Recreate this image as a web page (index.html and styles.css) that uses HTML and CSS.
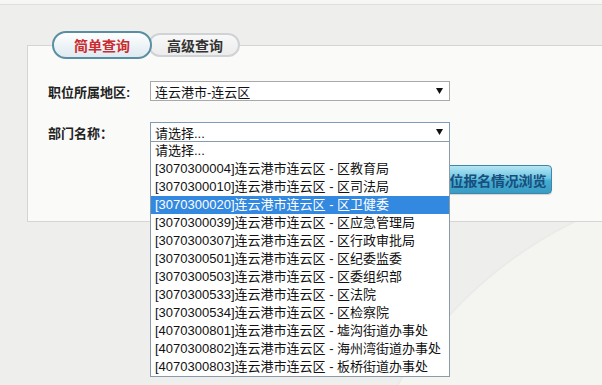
FILE: index.html
```html
<!DOCTYPE html>
<html lang="zh-CN">
<head>
<meta charset="utf-8">
<title>职位查询</title>
<link rel="stylesheet" href="styles.css">
</head>
<body>
<div class="topline"></div>
<div class="panel">
  <div class="tabs">
    <div class="tab tab-active">简单查询</div>
    <div class="tab tab-idle">高级查询</div>
  </div>
  <div class="row row-first">
    <div class="label">职位所属地区:</div>
    <div class="select">
      <span class="select-text">连云港市-连云区</span>
      <svg class="arrow" width="7" height="6" viewBox="0 0 7 6"><path d="M0 0H7L3.5 6Z" fill="#111"/></svg>
    </div>
  </div>
  <div class="row row-second">
    <div class="label">部门名称：</div>
    <div class="select select-focus">
      <span class="select-text">请选择...</span>
      <svg class="arrow" width="7" height="6" viewBox="0 0 7 6"><path d="M0 0H7L3.5 6Z" fill="#111"/></svg>
    </div>
  </div>
  <div class="button-row">
    <div class="btn">职位报名情况浏览</div>
  </div>
  <ul class="dropdown">
    <li>请选择...</li>
    <li>[3070300004]连云港市连云区 - 区教育局</li>
    <li>[3070300010]连云港市连云区 - 区司法局</li>
    <li class="selected">[3070300020]连云港市连云区 - 区卫健委</li>
    <li>[3070300039]连云港市连云区 - 区应急管理局</li>
    <li>[3070300307]连云港市连云区 - 区行政审批局</li>
    <li>[3070300501]连云港市连云区 - 区纪委监委</li>
    <li>[3070300503]连云港市连云区 - 区委组织部</li>
    <li>[3070300533]连云港市连云区 - 区法院</li>
    <li>[3070300534]连云港市连云区 - 区检察院</li>
    <li>[4070300801]连云港市连云区 - 墟沟街道办事处</li>
    <li>[4070300802]连云港市连云区 - 海州湾街道办事处</li>
    <li>[4070300803]连云港市连云区 - 板桥街道办事处</li>
  </ul>
</div>
</body>
</html>
```
FILE: styles.css
```css
html, body {
  margin: 0;
  padding: 0;
}
body {
  width: 602px;
  height: 385px;
  overflow: hidden;
  font-family: "Liberation Sans", "Noto Sans CJK SC", sans-serif;
  color: #222;
  background:
    radial-gradient(circle at 760px 600px, #f4f4f1 0, #f4f4f1 420px, #e9e9e7 421px, #eeeeec 423px);
  background-color: #eeeeec;
}
.topline {
  height: 4px;
  background: #f6f6f4;
  border-bottom: 1px solid #dfdfdb;
}
.panel {
  position: relative;
  box-sizing: border-box;
  margin: 40px 0 0 27px;
  height: 177px;
  background: #fafaf9;
  border: 1px solid #d5d5d3;
  border-right: none;
}
.tabs {
  display: flex;
  align-items: center;
  margin: -15px 0 0 24px;
  height: 28px;
}
.tab {
  box-sizing: border-box;
  display: flex;
  align-items: center;
  justify-content: center;
  font-size: 14px;
  font-weight: bold;
}
.tab-active {
  position: relative;
  z-index: 2;
  width: 100px;
  height: 28px;
  border: 2px solid #5a8ea2;
  border-radius: 14px;
  background: linear-gradient(#ffffff, #eaf2f6 60%, #dfeaf0);
  color: #cc2b2e;
}
.tab-idle {
  position: relative;
  z-index: 1;
  width: 92px;
  height: 24px;
  margin-left: -4px;
  padding-left: 2px;
  border: 2px solid #cfd3d6;
  border-radius: 12px;
  background: linear-gradient(#f8f8f8, #ececec);
  color: #333;
}
.row {
  display: grid;
  grid-template-columns: 102px 300px;
  align-items: center;
  padding-left: 20px;
}
.row-first {
  margin-top: 22px;
}
.row-second {
  margin-top: 21px;
}
.label {
  font-size: 13px;
  font-weight: bold;
  color: #222;
}
.select {
  box-sizing: border-box;
  height: 20px;
  display: flex;
  align-items: center;
  justify-content: space-between;
  padding: 0 6px 0 4px;
  background: #fff;
  border: 1px solid #a9a9a9;
  font-size: 13px;
}
.select-focus {
  border-color: #7f9db9;
}
.select-text {
  color: #111;
}
.arrow {
  display: block;
}
.button-row {
  display: flex;
  margin-top: 23px;
  padding-left: 402px;
}
.btn {
  box-sizing: border-box;
  height: 29px;
  width: 122px;
  display: flex;
  align-items: center;
  justify-content: center;
  border: 1px solid #3f87a6;
  border-radius: 4px;
  background: linear-gradient(#b5e6f4, #6fc6e2 45%, #45abd0 55%, #3a9cc4);
  color: #184e7c;
  font-size: 14px;
  font-weight: bold;
  letter-spacing: -0.2px;
  box-shadow: 0 1px 1px rgba(0,0,0,0.15);
}
.dropdown {
  position: absolute;
  z-index: 5;
  top: 95px;
  left: 122px;
  box-sizing: border-box;
  width: 300px;
  height: 236px;
  margin: 0;
  padding: 0;
  list-style: none;
  background: #fff;
  border: 1px solid #8a9bab;
  font-size: 13px;
}
.dropdown li {
  height: 18px;
  line-height: 18px;
  padding-left: 4px;
  color: #111;
  white-space: nowrap;
}
.dropdown li.selected {
  background: #3388df;
  color: #fff;
}
```
